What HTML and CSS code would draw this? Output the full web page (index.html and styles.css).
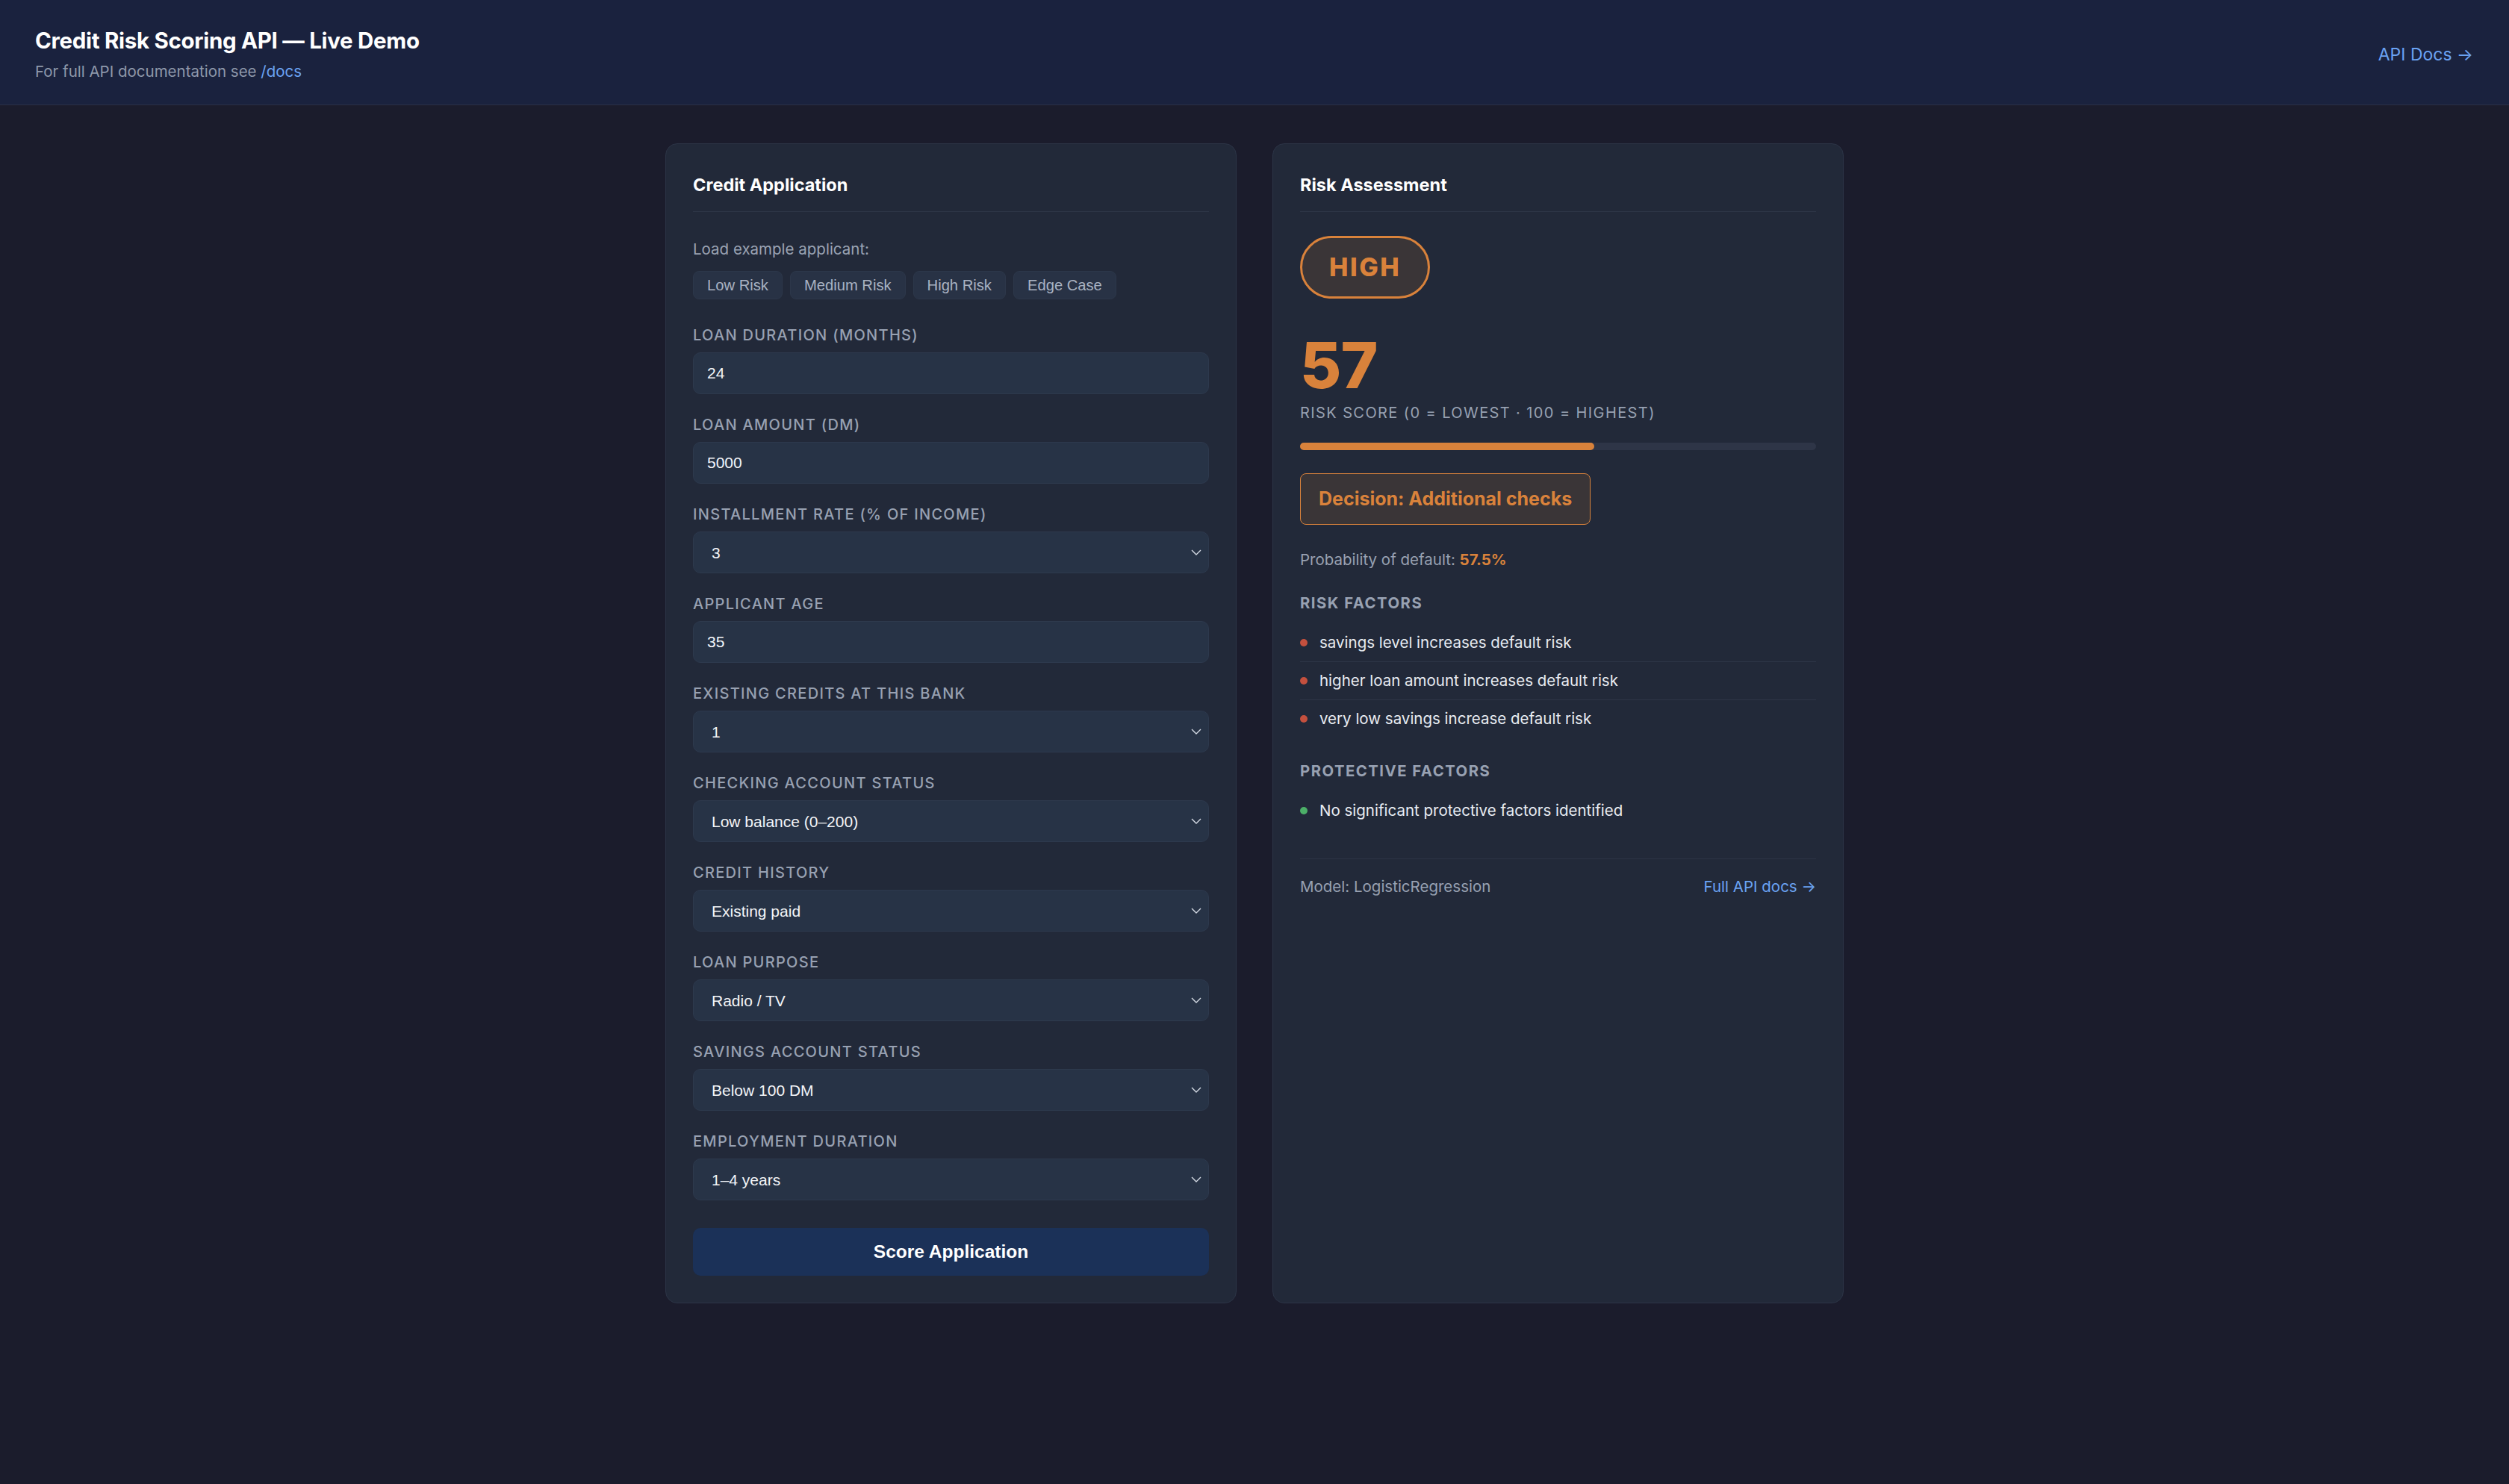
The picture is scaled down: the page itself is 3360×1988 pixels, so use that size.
FILE: index.html
```html
<!DOCTYPE html>
<html lang="en">
<head>
  <meta charset="UTF-8">
  <meta name="viewport" content="width=device-width, initial-scale=1.0">
  <title>Credit Risk Scoring API — Live Demo</title>
  <link rel="stylesheet" href="styles.css">
</head>
<body>

<header class="topbar">
  <div class="brand">
    <h1>Credit Risk Scoring API — Live Demo</h1>
    <p>For full API documentation see <a href="/docs">/docs</a></p>
  </div>
  <a class="docs-link" href="/docs">API Docs →</a>
</header>

<main class="layout">

  <!-- Application form -->
  <section class="card">
    <h2 class="card-title">Credit Application</h2>

    <p class="presets-label">Load example applicant:</p>
    <div class="presets">
      <button type="button" class="preset">Low Risk</button>
      <button type="button" class="preset">Medium Risk</button>
      <button type="button" class="preset">High Risk</button>
      <button type="button" class="preset">Edge Case</button>
    </div>

    <div class="field">
      <label for="duration">Loan Duration (months)</label>
      <input type="text" id="duration" value="24">
    </div>

    <div class="field">
      <label for="amount">Loan Amount (DM)</label>
      <input type="text" id="amount" value="5000">
    </div>

    <div class="field">
      <label for="installment">Installment Rate (% of income)</label>
      <div class="select-wrap">
        <select id="installment">
          <option>1</option>
          <option>2</option>
          <option selected>3</option>
          <option>4</option>
        </select>
        <svg class="chevron" viewBox="0 0 14 8"><path d="M1 1l6 6 6-6"/></svg>
      </div>
    </div>

    <div class="field">
      <label for="age">Applicant Age</label>
      <input type="text" id="age" value="35">
    </div>

    <div class="field">
      <label for="credits">Existing Credits at This Bank</label>
      <div class="select-wrap">
        <select id="credits">
          <option selected>1</option>
          <option>2</option>
          <option>3</option>
          <option>4</option>
        </select>
        <svg class="chevron" viewBox="0 0 14 8"><path d="M1 1l6 6 6-6"/></svg>
      </div>
    </div>

    <div class="field">
      <label for="checking">Checking Account Status</label>
      <div class="select-wrap">
        <select id="checking">
          <option>No checking account</option>
          <option selected>Low balance (0–200)</option>
          <option>Negative balance</option>
        </select>
        <svg class="chevron" viewBox="0 0 14 8"><path d="M1 1l6 6 6-6"/></svg>
      </div>
    </div>

    <div class="field">
      <label for="history">Credit History</label>
      <div class="select-wrap">
        <select id="history">
          <option selected>Existing paid</option>
          <option>Delayed previously</option>
          <option>Critical account</option>
        </select>
        <svg class="chevron" viewBox="0 0 14 8"><path d="M1 1l6 6 6-6"/></svg>
      </div>
    </div>

    <div class="field">
      <label for="purpose">Loan Purpose</label>
      <div class="select-wrap">
        <select id="purpose">
          <option selected>Radio / TV</option>
          <option>New car</option>
          <option>Furniture</option>
        </select>
        <svg class="chevron" viewBox="0 0 14 8"><path d="M1 1l6 6 6-6"/></svg>
      </div>
    </div>

    <div class="field">
      <label for="savings">Savings Account Status</label>
      <div class="select-wrap">
        <select id="savings">
          <option selected>Below 100 DM</option>
          <option>100–500 DM</option>
          <option>Unknown / none</option>
        </select>
        <svg class="chevron" viewBox="0 0 14 8"><path d="M1 1l6 6 6-6"/></svg>
      </div>
    </div>

    <div class="field">
      <label for="employment">Employment Duration</label>
      <div class="select-wrap">
        <select id="employment">
          <option>Unemployed</option>
          <option selected>1–4 years</option>
          <option>4–7 years</option>
        </select>
        <svg class="chevron" viewBox="0 0 14 8"><path d="M1 1l6 6 6-6"/></svg>
      </div>
    </div>

    <button type="button" class="submit">Score Application</button>
  </section>

  <!-- Result panel -->
  <section class="card">
    <h2 class="card-title">Risk Assessment</h2>

    <div class="badge">HIGH</div>

    <div class="score">57</div>
    <p class="score-label">Risk score (0 = lowest · 100 = highest)</p>
    <div class="bar"><div class="bar-fill" style="width: 57%"></div></div>

    <div class="decision">Decision: Additional checks</div>

    <p class="probability">Probability of default: <strong>57.5%</strong></p>

    <h3 class="section-title">Risk Factors</h3>
    <ul class="factors">
      <li><span class="dot red"></span>savings level increases default risk</li>
      <li><span class="dot red"></span>higher loan amount increases default risk</li>
      <li><span class="dot red"></span>very low savings increase default risk</li>
    </ul>

    <h3 class="section-title">Protective Factors</h3>
    <ul class="factors">
      <li><span class="dot green"></span>No significant protective factors identified</li>
    </ul>

    <div class="card-footer">
      <span>Model: LogisticRegression</span>
      <a href="/docs">Full API docs →</a>
    </div>
  </section>

</main>

</body>
</html>
```

FILE: styles.css
```css
body {
  margin: 0;
  background-color: #1b1c2c;
  color: #e5e9f0;
  font-family: Inter, "Noto Sans", sans-serif;
  font-size: 20px;
}
a {
  color: #6ba3f3;
  text-decoration: none;
}

/* Top bar */
.topbar {
  display: flex;
  align-items: center;
  justify-content: space-between;
  padding: 36px 48px 31px 47px;
  background-color: #1a223e;
  border-bottom: 1px solid #2a3046;
}
.brand h1 {
  margin: 0;
  font-size: 29.5px;
  line-height: 36px;
  font-weight: 700;
  color: #ffffff;
  letter-spacing: -0.3px;
}
.brand p {
  margin: 11px 0 0;
  font-size: 20.5px;
  line-height: 26px;
  color: #8e98aa;
}
.docs-link {
  font-size: 23px;
}

/* Two columns */
.layout {
  display: grid;
  grid-template-columns: 765px 765px;
  gap: 48px;
  justify-content: center;
  padding: 51px 0 48px;
}
.card {
  background-color: #222939;
  border: 1px solid #2c3446;
  border-radius: 16px;
  padding: 38px 36px 36px;
}
.card-title {
  margin: 0 0 32px;
  padding-bottom: 18px;
  border-bottom: 1px solid #2e3648;
  font-size: 23.5px;
  line-height: 34px;
  font-weight: 700;
  color: #ffffff;
}

/* Form */
.presets-label {
  margin: 37px 0 16px;
  font-size: 20.5px;
  line-height: 26px;
  color: #9aa3b3;
}
.presets {
  display: flex;
  gap: 10px;
  margin-bottom: 35px;
}
.preset {
  height: 38px;
  padding: 0 18px;
  background-color: #283245;
  border: 1px solid #2c374a;
  border-radius: 8px;
  color: #a9b2c2;
  font-family: "Liberation Sans", Arial, sans-serif;
  font-size: 20.2px;
}
.field {
  margin-bottom: 28px;
}
.field label {
  display: block;
  margin-bottom: 10px;
  font-size: 20px;
  line-height: 26px;
  font-weight: 500;
  letter-spacing: 1.3px;
  text-transform: uppercase;
  color: #98a1b2;
}
.field input, .field select {
  display: block;
  width: 100%;
  box-sizing: border-box;
  height: 56px;
  padding: 0 18px;
  background-color: #273346;
  border: 1px solid #2d394d;
  border-radius: 10px;
  color: #f3f5f8;
  font-family: "Liberation Sans", Arial, sans-serif;
  font-size: 21px;
  outline: none;
}
.field select {
  appearance: none;
  padding-left: 24px;
}
.select-wrap {
  position: relative;
}
.chevron {
  position: absolute;
  right: 10px;
  top: 24px;
  width: 14px;
  height: 8px;
  fill: none;
  stroke: #d5dbe4;
  stroke-width: 1.4;
  pointer-events: none;
}
.submit {
  display: block;
  width: 100%;
  height: 64px;
  margin-top: 37px;
  background-color: #1b3158;
  border: none;
  border-radius: 10px;
  color: #ffffff;
  font-family: "Liberation Sans", Arial, sans-serif;
  font-size: 24.5px;
  font-weight: 700;
}

/* Result */
.badge {
  display: inline-block;
  padding: 18px 36px;
  border: 3px solid #d9823b;
  border-radius: 999px;
  background-color: #3a3537;
  color: #d9823b;
  font-size: 34px;
  line-height: 42px;
  font-weight: 800;
  letter-spacing: 2.5px;
}
.score {
  margin-top: 42px;
  font-size: 85px;
  line-height: 96px;
  font-weight: 800;
  color: #d9823b;
  letter-spacing: -1px;
}
.score-label {
  margin: 2px 0 0;
  font-size: 20px;
  line-height: 26px;
  letter-spacing: 1.4px;
  text-transform: uppercase;
  color: #98a1b2;
}
.bar {
  height: 10px;
  margin-top: 27px;
  background-color: #2e3547;
  border-radius: 5px;
}
.bar-fill {
  height: 100%;
  background-color: #d9823b;
  border-radius: 5px;
}
.decision {
  display: inline-block;
  margin-top: 31px;
  padding: 0 24px;
  height: 67px;
  line-height: 67px;
  border: 1px solid #d9823b;
  border-radius: 8px;
  background-color: #3a3537;
  color: #d9823b;
  font-size: 25px;
  font-weight: 700;
}
.probability {
  margin: 34px 0 0;
  font-size: 20.5px;
  line-height: 26px;
  color: #98a1b2;
}
.probability strong {
  color: #d9823b;
}
.section-title {
  margin: 32px 0 15px;
  font-size: 20.3px;
  line-height: 26px;
  font-weight: 700;
  letter-spacing: 1.5px;
  text-transform: uppercase;
  color: #98a1b2;
}
.factors {
  list-style: none;
  margin: 0;
  padding: 0;
}
.factors li {
  display: flex;
  align-items: center;
  gap: 16px;
  padding: 12px 0;
  font-size: 20.5px;
  line-height: 26px;
  color: #e8ecf2;
}
.factors li + li {
  border-top: 1px solid #2e3648;
}
.dot {
  width: 10px;
  height: 10px;
  border-radius: 50%;
  flex-shrink: 0;
}
.dot.red {
  background-color: #c4503e;
}
.dot.green {
  background-color: #4caf68;
}
.card-footer {
  display: flex;
  justify-content: space-between;
  margin-top: 39px;
  padding-top: 24px;
  border-top: 1px solid #2c3446;
  font-size: 20.5px;
  line-height: 26px;
  color: #98a1b2;
}
```
